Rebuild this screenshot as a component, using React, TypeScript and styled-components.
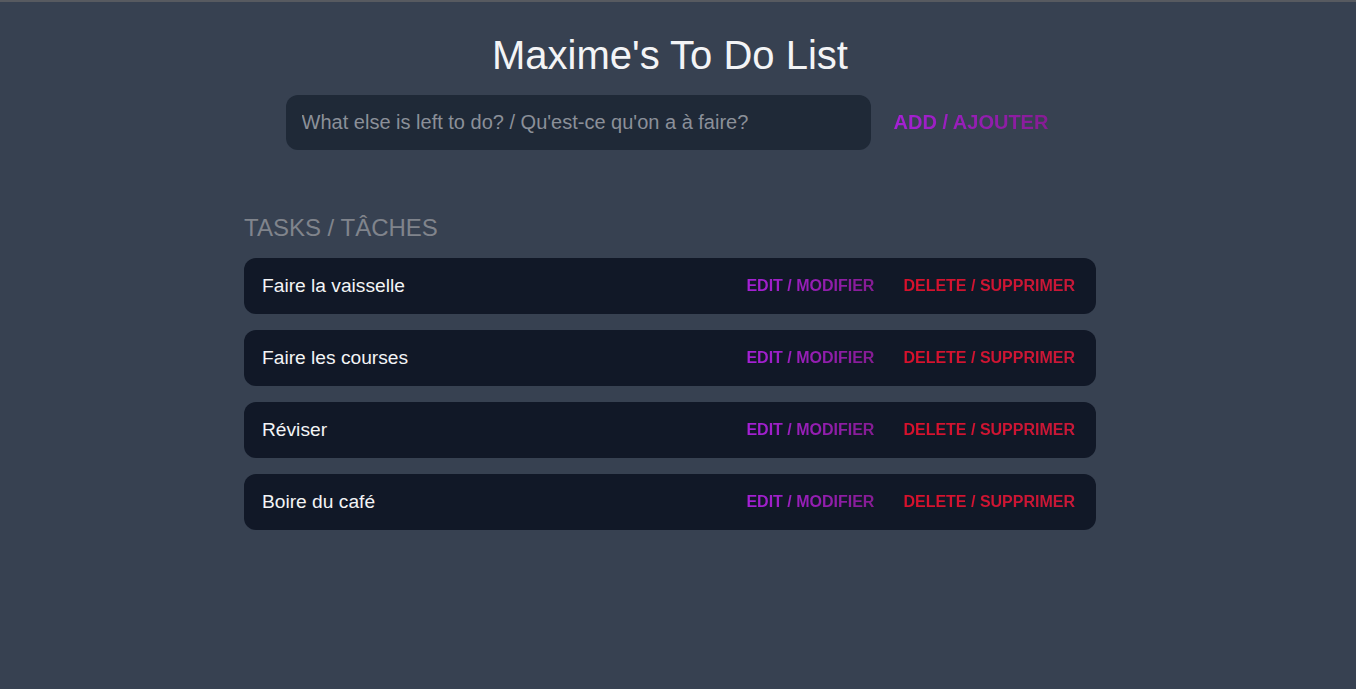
import React from 'react'
import styled, { createGlobalStyle } from 'styled-components'

const GlobalStyle = createGlobalStyle`
  body {
    margin: 0;
    min-height: 100vh;
    background-color: #374151;
    border-top: 2px solid #575a60;
    box-sizing: border-box;
    font-family: Arial, "Liberation Sans", Helvetica, sans-serif;
  }
`

const Page = styled.div`
  width: calc(100% - 16px);
  display: flex;
  flex-direction: column;
  align-items: center;
`

const Title = styled.h1`
  margin: 30px 0 0;
  font-size: 40px;
  line-height: 46px;
  font-weight: 400;
  color: #f3f4f6;
`

const Form = styled.form`
  margin-top: 17px;
  display: flex;
  align-items: center;
`

const Input = styled.input`
  width: 585px;
  height: 55px;
  box-sizing: border-box;
  padding: 0 16px;
  border: none;
  border-radius: 12px;
  background-color: #1f2937;
  color: #f3f4f6;
  font-family: inherit;
  font-size: 20px;
  outline: none;

  &::placeholder {
    color: #8b9099;
  }
`

const GradientButton = styled.button<{ $tone: 'purple' | 'red'; $size: number }>`
  border: none;
  padding: 0;
  font-family: inherit;
  font-weight: 700;
  font-size: ${p => p.$size}px;
  cursor: pointer;
  background-color: transparent;
  background-image: ${p =>
    p.$tone === 'purple'
      ? 'linear-gradient(90deg, #a520d6, #861c93)'
      : 'linear-gradient(90deg, #d8112c, #c81838)'};
  -webkit-background-clip: text;
  background-clip: text;
  color: transparent;
`

const AddButton = styled(GradientButton)`
  margin-left: 23px;
  margin-right: 6px;
`

const Tasks = styled.section`
  width: 852px;
  margin-top: 64px;
  display: flex;
  flex-direction: column;
`

const Heading = styled.h2`
  margin: 0 0 16px;
  font-size: 24px;
  line-height: 28px;
  font-weight: 400;
  color: #80848c;
`

const List = styled.ul`
  list-style: none;
  margin: 0;
  padding: 0;
  display: flex;
  flex-direction: column;
  gap: 16px;
`

const Task = styled.li`
  height: 56px;
  box-sizing: border-box;
  padding: 0 21px 0 18px;
  border-radius: 12px;
  background-color: #111827;
  display: flex;
  align-items: center;
`

const Label = styled.span`
  flex: 1;
  font-size: 19.2px;
  color: #f3f4f6;
`

const Actions = styled.div`
  display: flex;
  gap: 29px;
`

const tasks = ['Faire la vaisselle', 'Faire les courses', 'Réviser', 'Boire du café']

export default function App() {
  return (
    <Page>
      <GlobalStyle />
      <Title>Maxime's To Do List</Title>
      <Form onSubmit={e => e.preventDefault()}>
        <Input placeholder="What else is left to do? / Qu'est-ce qu'on a à faire?" />
        <AddButton type="submit" $tone="purple" $size={20}>
          ADD / AJOUTER
        </AddButton>
      </Form>
      <Tasks>
        <Heading>TASKS / TÂCHES</Heading>
        <List>
          {tasks.map(task => (
            <Task key={task}>
              <Label>{task}</Label>
              <Actions>
                <GradientButton $tone="purple" $size={16}>EDIT / MODIFIER</GradientButton>
                <GradientButton $tone="red" $size={16}>DELETE / SUPPRIMER</GradientButton>
              </Actions>
            </Task>
          ))}
        </List>
      </Tasks>
    </Page>
  )
}
